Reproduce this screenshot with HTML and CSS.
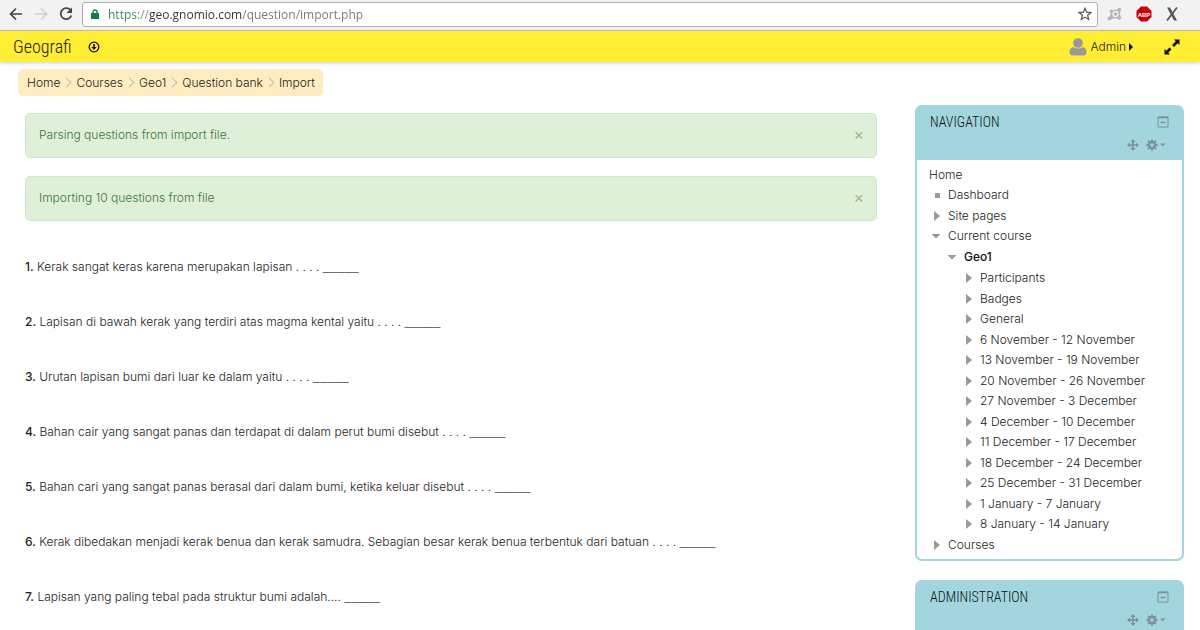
FILE: index.html
```
<!DOCTYPE html>
<html lang="id">
<head>
    <meta charset="UTF-8">
    <meta name="viewport" content="width=device-width, initial-scale=1.0">
    <title>Geografi: Import</title>
    <link rel="stylesheet" href="styles.css">
</head>
<body>
    <div class="browser-bar">
        <div class="history">
            <button class="browser-btn" type="button" aria-label="Back">
                <svg width="14" height="14" viewBox="0 0 14 14"><path d="M13 7H2M7 1.500L1.500 7L7 12.500" fill="none" stroke="#444" stroke-width="1.700"/></svg>
            </button>
            <button class="browser-btn" type="button" aria-label="Forward">
                <svg width="14" height="14" viewBox="0 0 14 14"><path d="M1 7H12M7 1.500L12.500 7L7 12.500" fill="none" stroke="#d0d0d0" stroke-width="1.700"/></svg>
            </button>
            <button class="browser-btn" type="button" aria-label="Reload">
                <svg width="14" height="14" viewBox="0 0 14 14"><path d="M11.800 3.500A5.500 5.500 0 1 0 12.400 8.500" fill="none" stroke="#444" stroke-width="1.800"/><path d="M13 0.500V6H7.500Z" fill="#444"/></svg>
            </button>
        </div>
        <div class="address">
            <svg width="8" height="10" viewBox="0 0 8 10"><path d="M2 5V3a2 2 0 0 1 4 0V5" fill="none" stroke="#0b8043" stroke-width="1.300"/><rect y="4" width="8" height="6" rx="0.500" fill="#0b8043"/></svg>
            <input class="address-input" type="text" aria-label="Address" value="https://geo.gnomio.com/question/import.php">
            <button class="browser-btn" type="button" aria-label="Bookmark">
                <svg width="14" height="14" viewBox="0 0 14 14"><path d="M7 1.200L8.600 5.200L12.900 5.500L9.600 8.200L10.700 12.400L7 10.100L3.300 12.400L4.400 8.200L1.100 5.500L5.400 5.200Z" fill="none" stroke="#555" stroke-width="1.200"/></svg>
            </button>
        </div>
        <div class="extensions">
            <button class="browser-btn" type="button" aria-label="Avast">
                <svg width="16" height="16" viewBox="0 0 16 16"><path d="M3.500 3.500C7 4.500 10 4 12.500 1.500L14.500 3C12.500 6 12.500 9 14.500 12L12.500 14C9.500 12 6 12.200 3.500 14L1 12.500C3.500 10 4.500 8 2.500 5Z" fill="#b5b6be"/><circle cx="8.500" cy="8" r="2.500" fill="#b5b6be" stroke="#f2f2f2" stroke-width="1.300"/><circle cx="2.500" cy="12.500" r="2" fill="#b5b6be"/></svg>
            </button>
            <button class="browser-btn" type="button" aria-label="Adblock Plus">
                <svg width="16" height="16" viewBox="0 0 16 16"><path d="M5 0.500H11L15.500 5V11L11 15.500H5L0.500 11V5Z" fill="#c4000a"/><text class="abp-text" x="8" y="11" text-anchor="middle">ABP</text></svg>
            </button>
            <button class="browser-btn" type="button" aria-label="X">
                <svg width="14" height="16" viewBox="0 0 14 16"><path d="M2 1.500H5L12 14.500H9Z" fill="#555"/><path d="M12 1.500L2 14.500" stroke="#555" stroke-width="1.800"/></svg>
            </button>
        </div>
    </div>

    <header class="navbar">
        <a class="brand" href="#">Geografi</a>
        <button class="navbar-btn" type="button" aria-label="Go to bottom">
            <svg width="12" height="12" viewBox="0 0 12 12"><circle cx="6" cy="6" r="4.800" fill="none" stroke="#111" stroke-width="1.300"/><path d="M5.200 3H6.800V6H8.700L6 9L3.300 6H5.200Z" fill="#111"/></svg>
        </button>
        <button class="user-menu" type="button">
            <svg width="18" height="18" viewBox="0 0 18 18"><circle cx="9" cy="5" r="4.800" fill="#999"/><path d="M4 9Q9 12 14 9Q17.500 10 17.500 14Q17.500 17.500 14 17.500H4Q0.500 17.500 0.500 14Q0.500 10 4 9Z" fill="#999"/></svg>
            Admin
            <svg width="4" height="8" viewBox="0 0 4 8"><path d="M0 0L4 4L0 8Z" fill="#111"/></svg>
        </button>
        <button class="navbar-btn" type="button" aria-label="Full screen">
            <svg width="16" height="16" viewBox="0 0 16 16"><path d="M10 0.500H15.500V6L13.700 4.200L10 7.900L8.100 6L11.800 2.300ZM0.500 10V15.500H6L4.200 13.700L7.400 10.500L5.500 8.600L2.300 11.800Z" fill="#111"/></svg>
        </button>
    </header>

    <nav class="breadcrumb" aria-label="Breadcrumb">
        <a href="#">Home</a>
        <a href="#">Courses</a>
        <a href="#">Geo1</a>
        <a href="#">Question bank</a>
        <a href="#">Import</a>
    </nav>

    <div class="page">
        <main class="content">
            <div class="alert">
                Parsing questions from import file.
                <button class="alert-close" type="button" aria-label="Close">×</button>
            </div>
            <div class="alert">
                Importing 10 questions from file
                <button class="alert-close" type="button" aria-label="Close">×</button>
            </div>
            <div class="questions">
                <p><b>1.</b> Kerak sangat keras karena merupakan lapisan . . . . <span class="blank">_____</span></p>
                <p><b>2.</b> Lapisan di bawah kerak yang terdiri atas magma kental yaitu . . . . <span class="blank">_____</span></p>
                <p><b>3.</b> Urutan lapisan bumi dari luar ke dalam yaitu . . . . <span class="blank">_____</span></p>
                <p><b>4.</b> Bahan cair yang sangat panas dan terdapat di dalam perut bumi disebut . . . . <span class="blank">_____</span></p>
                <p><b>5.</b> Bahan cari yang sangat panas berasal dari dalam bumi, ketika keluar disebut . . . . <span class="blank">_____</span></p>
                <p><b>6.</b> Kerak dibedakan menjadi kerak benua dan kerak samudra. Sebagian besar kerak benua terbentuk dari batuan . . . . <span class="blank">_____</span></p>
                <p><b>7.</b> Lapisan yang paling tebal pada struktur bumi adalah.... <span class="blank">_____</span></p>
            </div>
        </main>

        <aside class="sidebar">
            <section class="block">
                <div class="block-header">
                    <h2 class="block-title">Navigation</h2>
                    <button class="block-btn" type="button" aria-label="Hide block">
                        <svg width="12" height="12" viewBox="0 0 12 12"><path d="M1 1H11V11H1Z" fill="none" stroke="#7d9296"/><path d="M1 1.500H11M3.500 6.500H8.500" stroke="#7d9296" stroke-width="1.500"/></svg>
                    </button>
                    <div class="block-tools">
                        <button class="block-btn" type="button" aria-label="Move block">
                            <svg width="12" height="12" viewBox="0 0 12 12"><path d="M6 1V11M1 6H11" stroke="#7d9296" stroke-width="1.600"/><path d="M6 0L8.500 3H3.500ZM6 12L8.500 9H3.500ZM0 6L3 3.500V8.500ZM12 6L9 3.500V8.500Z" fill="#7d9296"/></svg>
                        </button>
                        <button class="block-btn" type="button" aria-label="Actions">
                            <svg width="20" height="12" viewBox="0 0 20 12"><circle cx="6" cy="6" r="3" fill="none" stroke="#7d9296" stroke-width="2.400"/><path d="M6 0.500V3M6 9V11.500M0.500 6H3M9 6H11.500M2 2L4 4M8 8L10 10M10 2L8 4M4 8L2 10" stroke="#7d9296" stroke-width="2"/><path d="M14 4.500H19.500L16.700 7.300Z" fill="#7d9296"/></svg>
                        </button>
                    </div>
                </div>
                <div class="block-content">
                    <a href="#">Home</a>
                    <ul class="tree">
                        <li class="leaf"><a href="#">Dashboard</a></li>
                        <li class="closed"><a href="#">Site pages</a></li>
                        <li class="open"><a href="#">Current course</a>
                            <ul>
                                <li class="open"><a class="current" href="#">Geo1</a>
                                    <ul>
                                        <li class="closed"><a href="#">Participants</a></li>
                                        <li class="closed"><a href="#">Badges</a></li>
                                        <li class="closed"><a href="#">General</a></li>
                                        <li class="closed"><a href="#">6 November - 12 November</a></li>
                                        <li class="closed"><a href="#">13 November - 19 November</a></li>
                                        <li class="closed"><a href="#">20 November - 26 November</a></li>
                                        <li class="closed"><a href="#">27 November - 3 December</a></li>
                                        <li class="closed"><a href="#">4 December - 10 December</a></li>
                                        <li class="closed"><a href="#">11 December - 17 December</a></li>
                                        <li class="closed"><a href="#">18 December - 24 December</a></li>
                                        <li class="closed"><a href="#">25 December - 31 December</a></li>
                                        <li class="closed"><a href="#">1 January - 7 January</a></li>
                                        <li class="closed"><a href="#">8 January - 14 January</a></li>
                                    </ul>
                                </li>
                            </ul>
                        </li>
                        <li class="closed"><a href="#">Courses</a></li>
                    </ul>
                </div>
            </section>

            <section class="block">
                <div class="block-header">
                    <h2 class="block-title">Administration</h2>
                    <button class="block-btn" type="button" aria-label="Hide block">
                        <svg width="12" height="12" viewBox="0 0 12 12"><path d="M1 1H11V11H1Z" fill="none" stroke="#7d9296"/><path d="M1 1.500H11M3.500 6.500H8.500" stroke="#7d9296" stroke-width="1.500"/></svg>
                    </button>
                    <div class="block-tools">
                        <button class="block-btn" type="button" aria-label="Move block">
                            <svg width="12" height="12" viewBox="0 0 12 12"><path d="M6 1V11M1 6H11" stroke="#7d9296" stroke-width="1.600"/><path d="M6 0L8.500 3H3.500ZM6 12L8.500 9H3.500ZM0 6L3 3.500V8.500ZM12 6L9 3.500V8.500Z" fill="#7d9296"/></svg>
                        </button>
                        <button class="block-btn" type="button" aria-label="Actions">
                            <svg width="20" height="12" viewBox="0 0 20 12"><circle cx="6" cy="6" r="3" fill="none" stroke="#7d9296" stroke-width="2.400"/><path d="M6 0.500V3M6 9V11.500M0.500 6H3M9 6H11.500M2 2L4 4M8 8L10 10M10 2L8 4M4 8L2 10" stroke="#7d9296" stroke-width="2"/><path d="M14 4.500H19.500L16.700 7.300Z" fill="#7d9296"/></svg>
                        </button>
                    </div>
                </div>
            </section>
        </aside>
    </div>
</body>
</html>
```
FILE: styles.css
```
* {
    box-sizing: border-box;
}

body {
    background: #fff;
    color: #222;
    font-family: Inter, sans-serif;
    font-size: 12px;
    font-weight: 300;
    height: 100vh;
    line-height: 20px;
    margin: 0;
    overflow: hidden;
}

a {
    color: inherit;
    text-decoration: none;
}

button {
    background: none;
    border: 0;
    color: inherit;
    cursor: pointer;
    font: inherit;
    padding: 0;
}

svg {
    display: block;
}

/* browser toolbar */
.browser-bar {
    align-items: center;
    background: #f2f2f2;
    border-bottom: 1px solid #c8c6b0;
    display: flex;
    gap: 9px;
    height: 31px;
    padding: 0 21px 2px 9px;
}

.history {
    display: flex;
    gap: 11px;
}

.address {
    align-items: center;
    background: #fff;
    border: 1px solid #b0b0b0;
    border-radius: 3px;
    display: flex;
    flex: 1;
    gap: 9px;
    height: 25px;
    padding: 0 5px 0 8px;
}

/* scheme green, host dark, path grey */
.address-input {
    background: linear-gradient(to right, #2f8a5c 31px, #888 31px, #888 41px, #333 41px, #333 134px, #777 134px);
    -webkit-background-clip: text;
    background-clip: text;
    border: 0;
    color: transparent;
    flex: 1;
    font-family: "Open Sans", sans-serif;
    font-size: 12px;
    min-width: 0;
    outline: 0;
    padding: 0;
}

.extensions {
    display: flex;
    gap: 13px;
}

.abp-text {
    fill: #fff;
    font-family: "Liberation Sans", sans-serif;
    font-size: 6px;
    font-weight: bold;
}

/* site header */
.navbar {
    align-items: center;
    background: #ffee33;
    box-shadow: 0 1px 4px rgba(0, 0, 0, 0.2);
    color: #222;
    display: flex;
    height: 31px;
    padding: 0 20px 0 13px;
}

.brand {
    font-family: "Roboto Condensed", "Liberation Sans Narrow", sans-serif;
    font-size: 18px;
    font-weight: 300;
    margin-right: 16px;
}

.user-menu {
    align-items: center;
    display: flex;
    gap: 3px;
    margin-left: auto;
    margin-right: 31px;
}

.breadcrumb {
    background: #ffecc0;
    border-radius: 5px;
    display: flex;
    line-height: 27px;
    margin: 7px 18px 0;
    padding: 0 8px 0 9px;
    width: fit-content;
}

.breadcrumb a + a::before {
    border: solid #bbb;
    border-width: 1px 1px 0 0;
    content: "";
    display: inline-block;
    height: 6px;
    margin: 0 6px 1px 3px;
    transform: rotate(45deg);
    width: 6px;
}

.page {
    align-items: flex-start;
    display: flex;
    gap: 38px;
    padding: 9px 16px 0 25px;
}

.content {
    flex: 1;
    padding-top: 8px;
}

.alert {
    align-items: center;
    background: #dff0d8;
    border: 1px solid #d0e6c6;
    border-radius: 5px;
    color: #3c763d;
    display: flex;
    justify-content: space-between;
    margin-bottom: 18px;
    padding: 11px 12px 12px 13px;
}

.alert-close {
    color: #9fb39a;
    font-size: 16px;
    font-weight: 400;
    line-height: 18px;
    padding-bottom: 2px;
}

.questions {
    padding-top: 18px;
}

.questions p {
    margin: 0 0 35px;
}

.questions b {
    font-weight: 500;
}

.blank {
    font-family: "Liberation Mono", monospace;
    line-height: 1;
}

/* side blocks */
.sidebar {
    width: 269px;
}

.block {
    border: 2px solid #a2d5dd;
    border-radius: 7px;
    margin-bottom: 19px;
}

.block-header {
    background: #a2d5dd;
    display: grid;
    grid-template-columns: 1fr auto;
    padding: 4px 13px 5px;
    row-gap: 2px;
}

.block-title {
    color: #111;
    font-family: "Roboto Condensed", "Liberation Sans Narrow", sans-serif;
    font-size: 14px;
    font-weight: 300;
    line-height: 22px;
    margin: 0;
    text-transform: uppercase;
}

.block-tools {
    display: flex;
    gap: 7px;
    grid-column: 1 / -1;
    height: 20px;
    justify-content: flex-end;
    padding-right: 3px;
}

.block-content {
    padding: 5px 12px 4px;
}

.block-content > a {
    display: block;
}

.tree,
.tree ul {
    list-style: none;
    margin: 0;
    padding: 0;
}

.tree li {
    padding-left: 19px;
}

.tree ul li {
    padding-left: 16px;
}

.tree a {
    align-items: center;
    display: flex;
    margin-left: -17px;
}

.tree a::before {
    background: #999;
    content: "";
    flex: none;
    margin-right: 8px;
}

.tree li:nth-child(odd) > a {
    padding-bottom: 1px;
}

.leaf > a::before {
    height: 5px;
    margin-left: 4px;
    width: 5px;
}

.closed > a::before {
    clip-path: polygon(0 0, 100% 50%, 0 100%);
    height: 10px;
    margin-left: 3px;
    width: 6px;
}

.open > a::before {
    clip-path: polygon(0 0, 100% 0, 50% 100%);
    height: 5px;
    margin-right: 7px;
    width: 10px;
}

.tree .current {
    color: #111;
    font-weight: 500;
}
```
